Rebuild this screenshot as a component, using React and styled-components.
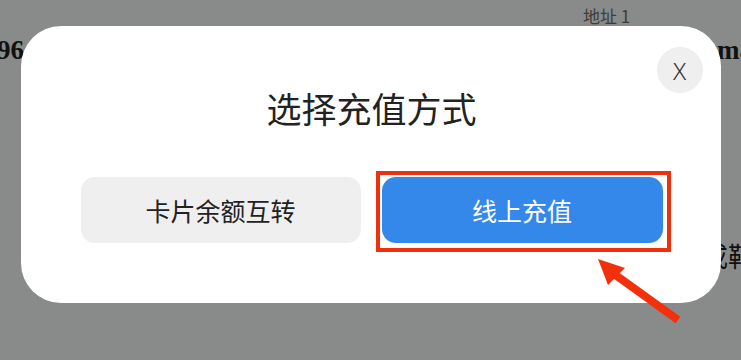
import React from "react";
import styled, { createGlobalStyle } from "styled-components";

const App = () => {
  return (
    <>
      <GlobalStyle />
      <Page>
        <TopRow>
          <Address>地址 1</Address>
        </TopRow>
        <InfoRow>
          <Cell>96</Cell>
          <Cell $right>ma</Cell>
        </InfoRow>
        <LowerRow>
          <Cell $right $light>戒鞘</Cell>
        </LowerRow>
      </Page>

      <Overlay>
        <Modal>
          <CloseButton>X</CloseButton>
          <Title>选择充值方式</Title>
          <Actions>
            <Choice>卡片余额互转</Choice>
            <Highlighted>
              <Choice $primary>线上充值</Choice>
              <Marker />
            </Highlighted>
          </Actions>
        </Modal>
        <Arrow viewBox="0 0 100 80">
          <line x1="88" y1="70" x2="20" y2="21" stroke="#f2300c" strokeWidth="8" />
          <polygon points="8,9 18,35 35,18" fill="#f2300c" />
        </Arrow>
      </Overlay>
    </>
  );
};

const GlobalStyle = createGlobalStyle`
  html, body {
    margin: 0;
    padding: 0;
    background: #898989;
    overflow: hidden;
  }
  body {
    font-family: "Noto Sans CJK SC", "Noto Sans", sans-serif;
  }
`;

const Page = styled.div`
  height: 360px;
  display: flex;
  flex-direction: column;
  background: #898a8a;
`;

const TopRow = styled.div`
  display: flex;
  padding: 4px 0 0 583px;
  height: 24px;
`;

const Address = styled.span`
  font-size: 17px;
  color: #3c3c3c;
  line-height: 24px;
`;

const InfoRow = styled.div`
  display: flex;
  justify-content: space-between;
  margin: 6px -12px 0 -3px;
  height: 32px;
`;

const LowerRow = styled.div`
  display: flex;
  justify-content: flex-end;
  margin: 176px -14px 0 0;
`;

const Cell = styled.span`
  font-family: "Liberation Serif", "Noto Sans CJK SC", serif;
  font-weight: ${(props) => (props.$light ? 400 : 700)};
  font-size: 27px;
  color: #111;
  line-height: 32px;
`;

const Overlay = styled.div`
  position: fixed;
  inset: 0;
  display: flex;
  justify-content: center;
  align-items: flex-start;
  padding-top: 26px;
`;

const Modal = styled.div`
  position: relative;
  width: 700px;
  height: 277px;
  box-sizing: border-box;
  padding: 61px 58px 60px 60px;
  background: #fff;
  border-radius: 40px;
  display: flex;
  flex-direction: column;
  align-items: center;
`;

const CloseButton = styled.div`
  position: absolute;
  top: 21px;
  right: 18px;
  width: 46px;
  height: 46px;
  border-radius: 50%;
  background: #efefef;
  display: flex;
  align-items: center;
  justify-content: center;
  font-family: "Noto Sans", sans-serif;
  font-weight: 300;
  font-size: 24px;
  color: #333;
`;

const Title = styled.h2`
  margin: 0 0 48px;
  font-size: 35px;
  line-height: 42px;
  font-weight: 400;
  color: #222;
`;

const Actions = styled.div`
  display: grid;
  grid-template-columns: 280px 281px;
  gap: 21px;
  width: 100%;
`;

const Highlighted = styled.div`
  position: relative;
`;

const Choice = styled.div`
  height: 66px;
  border-radius: 14px;
  display: flex;
  align-items: center;
  justify-content: center;
  font-size: 25px;
  background: ${(props) => (props.$primary ? "#3488ea" : "#efefef")};
  color: ${(props) => (props.$primary ? "#fff" : "#222")};
`;

const Marker = styled.div`
  position: absolute;
  top: -6px;
  left: -6px;
  right: -8px;
  bottom: -9px;
  border: 4px solid #f0300c;
  pointer-events: none;
`;

const Arrow = styled.svg`
  position: absolute;
  left: 590px;
  top: 250px;
  width: 100px;
  height: 80px;
`;

export default App;
